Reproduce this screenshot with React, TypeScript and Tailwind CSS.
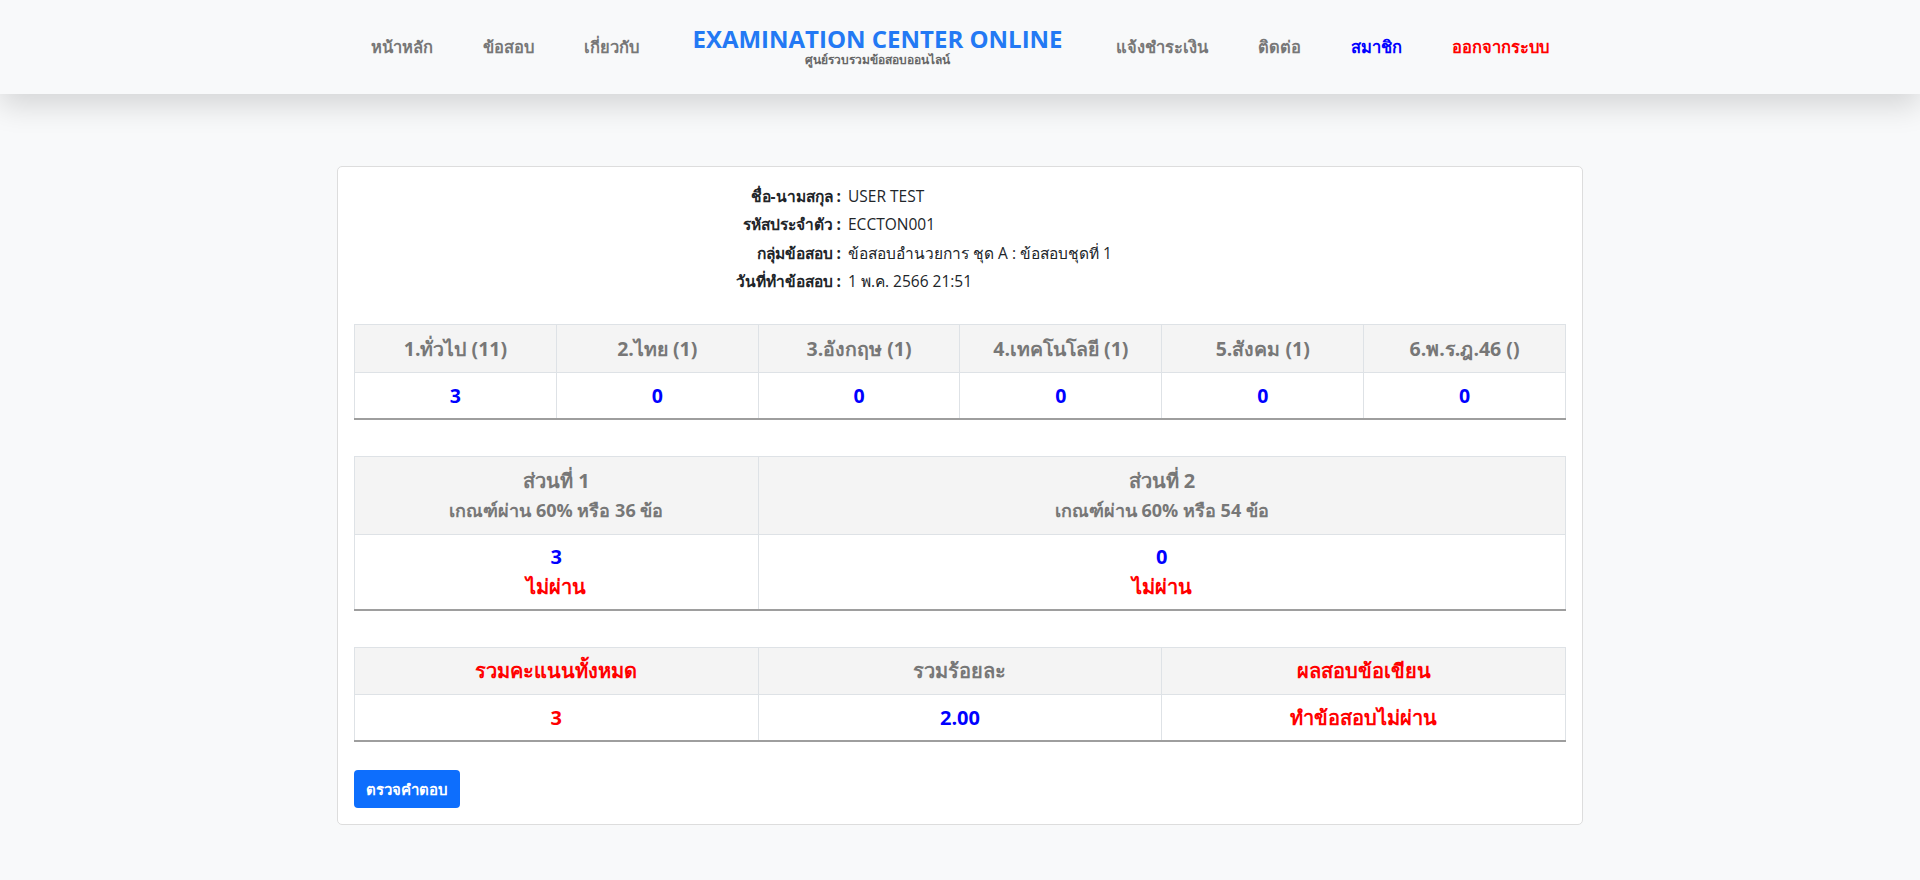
import React from 'react'

const font = { fontFamily: '"Open Sans", "Noto Sans", sans-serif' }

const navLeft = ['หน้าหลัก', 'ข้อสอบ', 'เกี่ยวกับ']

const info = [
  ['ชื่อ-นามสกุล :', 'USER TEST'],
  ['รหัสประจำตัว :', 'ECCTON001'],
  ['กลุ่มข้อสอบ :', 'ข้อสอบอำนวยการ ชุด A : ข้อสอบชุดที่ 1'],
  ['วันที่ทำข้อสอบ :', '1 พ.ค. 2566 21:51'],
]

const subjects = [
  ['1.ทั่วไป (11)', '3'],
  ['2.ไทย (1)', '0'],
  ['3.อังกฤษ (1)', '0'],
  ['4.เทคโนโลยี (1)', '0'],
  ['5.สังคม (1)', '0'],
  ['6.พ.ร.ฎ.46 ()', '0'],
]

const Header = () => (
  <header className="relative z-10 h-[94px] bg-[#f8f9fa] shadow-[0_12px_28px_rgba(0,0,0,0.14)]">
    <nav className="flex h-full items-center justify-center text-[16.5px] font-bold">
      {navLeft.map((n) => (
        <a key={n} className="px-[25px] text-[#777777]">{n}</a>
      ))}
      <div className="flex flex-col items-center px-[28px] pb-[1px]">
        <span className="text-[24px] leading-[26px] font-bold text-[#2379f4]">EXAMINATION CENTER ONLINE</span>
        <span className="mt-[1px] text-[12px] leading-[14px] font-bold text-[#666666]">ศูนย์รวบรวมข้อสอบออนไลน์</span>
      </div>
      <a className="px-[25px] text-[#777777]">แจ้งชำระเงิน</a>
      <a className="px-[25px] text-[#777777]">ติดต่อ</a>
      <a className="px-[25px] text-[#0000ff]">สมาชิก</a>
      <a className="px-[25px] text-[#ff0000]">ออกจากระบบ</a>
    </nav>
  </header>
)

const th = 'border border-[#dee2e6] bg-[#f4f4f4] text-[#777777] font-bold text-center'
const td = 'border-x border-[#dee2e6] bg-white font-bold text-center'

export default function App() {
  return (
    <div style={font} className="min-h-[880px] bg-[#f8f9fa] text-[#212529]">
      <Header />
      <main className="pt-[72px] pb-10">
        <div className="mx-auto w-[1246px] rounded-[5px] border border-[#dddddd] bg-white px-4 pt-[15px] pb-4">
          <div className="flex flex-col text-[15.5px]">
            {info.map(([k, v]) => (
              <div key={k} className="flex h-[28.6px] items-center">
                <div className="w-[487px] text-right font-bold">{k}</div>
                <div className="pl-[7px]">{v}</div>
              </div>
            ))}
          </div>

          <table className="mt-[28px] w-full table-fixed border-collapse border-b-2 border-b-[#9e9e9e]">
            <thead>
              <tr className="h-[48px] text-[19.5px]">
                {subjects.map(([h]) => (
                  <th key={h} className={th}>{h}</th>
                ))}
              </tr>
            </thead>
            <tbody>
              <tr className="h-[46px] text-[19.5px] text-[#0000ff]">
                {subjects.map(([h, v]) => (
                  <td key={h} className={td}>{v}</td>
                ))}
              </tr>
            </tbody>
          </table>

          <table className="mt-[36px] w-full table-fixed border-collapse border-b-2 border-b-[#9e9e9e]">
            <thead>
              <tr className="h-[78px]">
                <th className={`${th} w-1/3`}>
                  <div className="text-[20px] leading-[30px]">ส่วนที่ 1</div>
                  <div className="text-[18px] leading-[28px]">เกณฑ์ผ่าน 60% หรือ 36 ข้อ</div>
                </th>
                <th className={th}>
                  <div className="text-[20px] leading-[30px]">ส่วนที่ 2</div>
                  <div className="text-[18px] leading-[28px]">เกณฑ์ผ่าน 60% หรือ 54 ข้อ</div>
                </th>
              </tr>
            </thead>
            <tbody>
              <tr className="h-[76px] text-[20px]">
                <td className={td}>
                  <div className="leading-[30px] text-[#0000ff]">3</div>
                  <div className="leading-[30px] text-[#ff0000]">ไม่ผ่าน</div>
                </td>
                <td className={td}>
                  <div className="leading-[30px] text-[#0000ff]">0</div>
                  <div className="leading-[30px] text-[#ff0000]">ไม่ผ่าน</div>
                </td>
              </tr>
            </tbody>
          </table>

          <table className="mt-[36px] w-full table-fixed border-collapse border-b-2 border-b-[#9e9e9e]">
            <thead>
              <tr className="h-[47px] text-[20px]">
                <th className={`${th} !text-[#ff0000]`}>รวมคะแนนทั้งหมด</th>
                <th className={th}>รวมร้อยละ</th>
                <th className={`${th} !text-[#ff0000]`}>ผลสอบข้อเขียน</th>
              </tr>
            </thead>
            <tbody>
              <tr className="h-[46px] text-[20px]">
                <td className={`${td} text-[#ff0000]`}>3</td>
                <td className={`${td} text-[#0000ff]`}>2.00</td>
                <td className={`${td} text-[#ff0000]`}>ทำข้อสอบไม่ผ่าน</td>
              </tr>
            </tbody>
          </table>

          <button className="mt-[28px] h-[38px] rounded-[4px] bg-[#0d6efd] px-[12px] text-[15px] font-bold text-white">
            ตรวจคำตอบ
          </button>
        </div>
      </main>
    </div>
  )
}
